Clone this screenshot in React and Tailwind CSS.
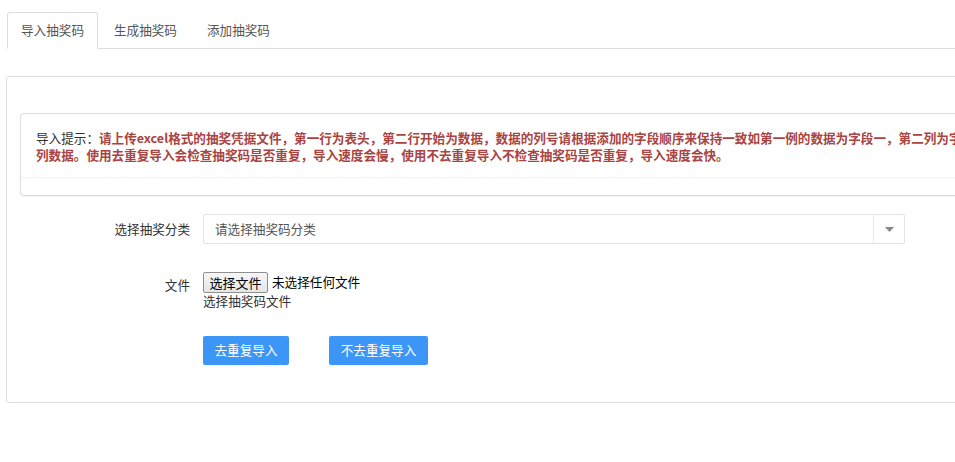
export default function App() {
  const font = "font-['Noto_Sans_CJK_SC','Noto_Sans',sans-serif]";
  return (
    <div className={`w-[955px] h-[462px] overflow-hidden bg-white ${font} text-[12.6px] text-[#333]`}>
      <div className="pt-[12px] pl-[7px] w-[1200px]">
        <ul className="flex border-b border-[#ddd]">
          <li className="-mb-px h-[37px] px-[13px] mr-[2px] flex items-center border border-[#ddd] border-b-white rounded-t-[3px] bg-white text-[#555] leading-none">
            导入抽奖码
          </li>
          <li className="-mb-px h-[37px] px-[13px] mr-[2px] flex items-center border border-transparent text-[#555] leading-none">
            生成抽奖码
          </li>
          <li className="-mb-px h-[37px] px-[13px] mr-[2px] flex items-center border border-transparent text-[#555] leading-none">
            添加抽奖码
          </li>
        </ul>
      </div>

      <div className="mt-[27px] ml-[6px] w-[1150px] border border-[#dedede] rounded-[3px] pt-[36px] pb-[37px] pl-[13px]">
        <div className="w-[1080px] border border-[#ddd] rounded-[4px] shadow-[0_1px_1px_rgba(0,0,0,0.05)] bg-white">
          <div className="pt-[15px] pb-[14px] pl-[15px] leading-[17px]">
            <div className="whitespace-nowrap">
              <span className="text-[#333]">导入提示：</span>
              <span className="font-bold text-[#a94442]">
                请上传excel格式的抽奖凭据文件，第一行为表头，第二行开始为数据，数据的列号请根据添加的字段顺序来保持一致如第一例的数据为字段一，第二列为字段二，以此类推第N
              </span>
            </div>
            <div className="whitespace-nowrap font-bold text-[#a94442]">
              列数据。使用去重复导入会检查抽奖码是否重复，导入速度会慢，使用不去重复导入不检查抽奖码是否重复，导入速度会快。
            </div>
          </div>
          <div className="h-[18px] border-t border-[#f2f2f2]"></div>
        </div>

        <div className="mt-[18px] flex items-center">
          <div className="w-[170px] text-right text-[#333]">选择抽奖分类</div>
          <div className="ml-[13px] w-[702px] h-[30px] border border-[#e3e3e3] rounded-[2px] flex items-stretch">
            <div className="flex-1 flex items-center pl-[11px] text-[#555]">请选择抽奖码分类</div>
            <div className="w-[31px] border-l border-[#e8e8e8] flex items-center justify-center">
              <svg width="9" height="5" viewBox="0 0 9 5">
                <path d="M0 0 L9 0 L4.5 5 Z" fill="#888" />
              </svg>
            </div>
          </div>
        </div>

        <div className="mt-[28px] flex items-start">
          <div className="w-[170px] text-right pt-[4px] leading-[17px] text-[#333]">文件</div>
          <div className="ml-[13px] flex flex-col">
            <div className="flex items-center h-[20px]">
              <span className="h-[21px] w-[65px] flex items-center justify-center border border-[#8f8f8f] rounded-[2px] bg-gradient-to-b from-[#f6f6f6] to-[#e6e6e6] text-[13px] text-black leading-none">
                选择文件
              </span>
              <span className="ml-[4px] text-black">未选择任何文件</span>
            </div>
            <div className="leading-[17px] text-[#333]">选择抽奖码文件</div>
          </div>
        </div>

        <div className="mt-[27px] flex pl-[183px]">
          <button className="h-[29px] w-[86px] rounded-[2px] bg-[#3b96f8] text-white leading-none flex items-center justify-center">
            去重复导入
          </button>
          <button className="ml-[40px] h-[29px] w-[99px] rounded-[2px] bg-[#3b96f8] text-white leading-none flex items-center justify-center">
            不去重复导入
          </button>
        </div>
      </div>
    </div>
  );
}
